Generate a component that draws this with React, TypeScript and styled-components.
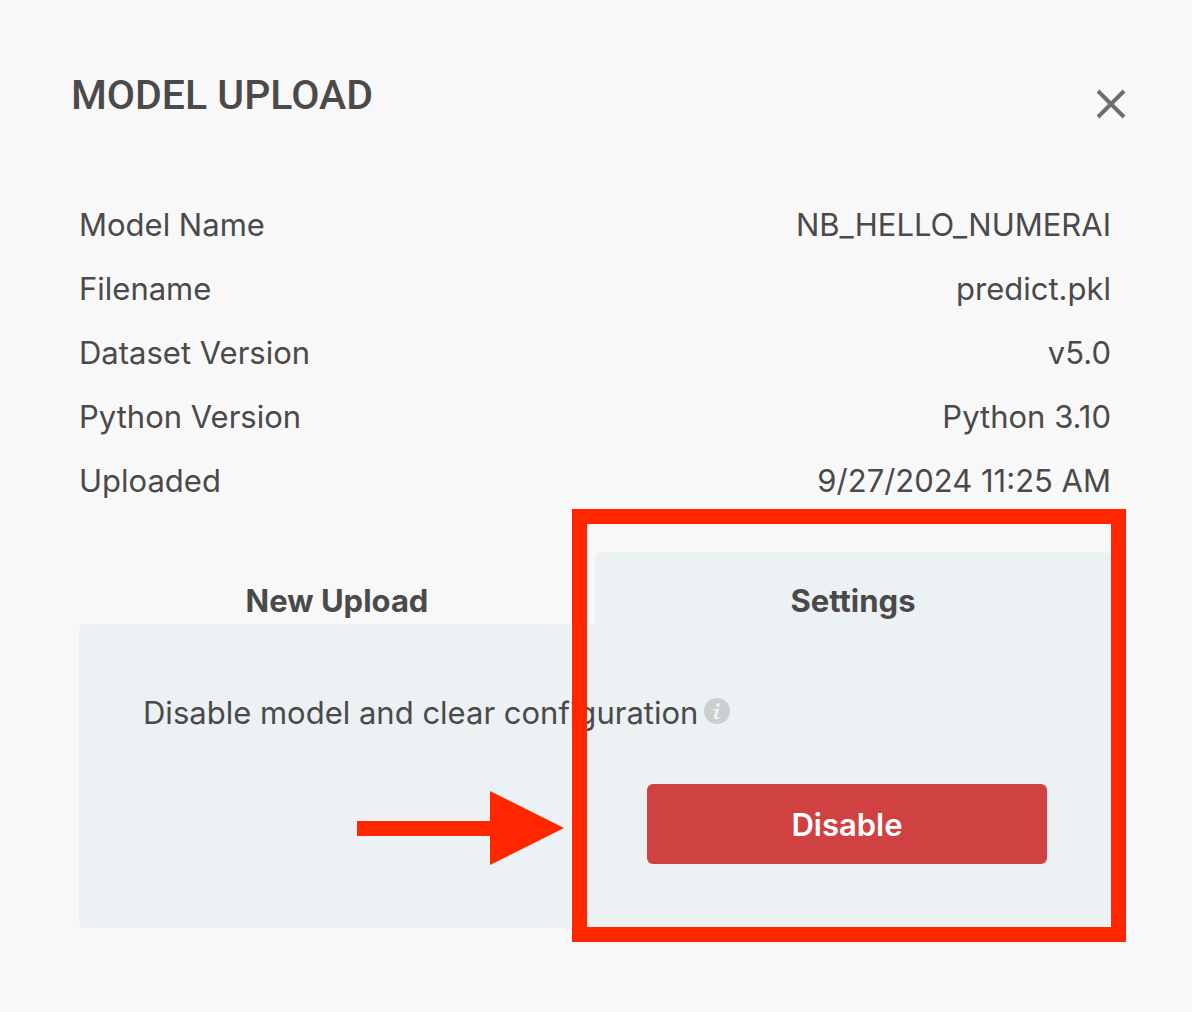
import React, { useState } from "react";
import styled, { createGlobalStyle } from "styled-components";

const GlobalStyle = createGlobalStyle`
  *, *::before, *::after { box-sizing: border-box; }
  body {
    margin: 0;
    background: #f8f8f8;
    color: #4a4a4a;
    font-family: Inter, "Liberation Sans", sans-serif;
    font-size: 31px;
    line-height: 50px;
  }
`;

const Dialog = styled.main`
  min-height: 100vh;
  padding: 72px 65px 84px 71px;
  background: #f8f8f8;
`;

const Header = styled.header`
  display: flex;
  justify-content: space-between;
  align-items: flex-start;
`;

const Title = styled.h1`
  margin: 0;
  font-family: Roboto, "Liberation Sans", sans-serif;
  font-size: 41px;
  font-weight: 500;
  line-height: 46px;
`;

const CloseButton = styled.button`
  display: flex;
  margin-top: 16px;
  padding: 0;
  border: 0;
  background: none;
  color: #6e6e6e;
  cursor: pointer;
`;

const Content = styled.div`
  padding: 80px 16px 0 8px;
`;

const Details = styled.dl`
  display: flex;
  flex-direction: column;
  gap: 14px;
  margin: 0 0 46px;
`;

const DetailRow = styled.div`
  display: flex;
  justify-content: space-between;
`;

const DetailLabel = styled.dt``;

const DetailValue = styled.dd`
  margin: 0;
  text-align: right;
`;

const TabSection = styled.section`
  position: relative;
`;

const TabList = styled.div`
  display: grid;
  grid-template-columns: 1fr 1fr;
`;

const Tab = styled.button<{ $active: boolean }>`
  padding: 26px 0 0;
  border: 0;
  border-radius: 6px 6px 0 0;
  background: ${(p) => (p.$active ? "#ecf1f4" : "transparent")};
  color: inherit;
  font: inherit;
  font-weight: 700;
  line-height: 46px;
  text-align: center;
  cursor: pointer;
`;

const Panel = styled.div`
  display: flex;
  flex-direction: column;
  gap: 46px;
  padding: 64px;
  border-radius: 6px 0 6px 6px;
  background: #ecf1f4;
`;

const Description = styled.p`
  display: flex;
  align-items: center;
  gap: 6px;
  margin: 0;
`;

const DangerButton = styled.button`
  align-self: flex-end;
  width: 400px;
  max-width: 100%;
  height: 80px;
  padding: 2px 0 0;
  border: 0;
  border-radius: 6px;
  background: #d04141;
  color: #fff;
  font: inherit;
  font-weight: 600;
  cursor: pointer;
`;

const Highlight = styled.div`
  position: absolute;
  top: -43px;
  right: -15px;
  bottom: -14px;
  left: calc(50% - 23px);
  border: 15px solid #ff2600;
  pointer-events: none;
`;

const Arrow = styled.svg`
  position: absolute;
  right: calc(50% + 31px);
  bottom: 63px;
  pointer-events: none;
`;

const details = [
  ["Model Name", "NB_HELLO_NUMERAI"],
  ["Filename", "predict.pkl"],
  ["Dataset Version", "v5.0"],
  ["Python Version", "Python 3.10"],
  ["Uploaded", "9/27/2024 11:25 AM"],
];

const tabs = ["New Upload", "Settings"];

function CloseIcon() {
  return (
    <svg width="32" height="32" viewBox="0 0 32 32" aria-hidden="true">
      <path d="M3 3 29 29M29 3 3 29" stroke="currentColor" strokeWidth="4" fill="none" />
    </svg>
  );
}

function InfoIcon() {
  return (
    <svg width="26" height="30" viewBox="0 0 26 30" aria-hidden="true">
      <circle cx="13" cy="13" r="13" fill="#cacfcf" />
      <circle cx="14" cy="7" r="2" fill="#ecf1f4" />
      <path
        d="M9 11H15L13 18.500Q13 19.500 15.500 19V20.500Q9.500 22.500 10 18.500L11.500 12.500L9 12.200Z"
        fill="#ecf1f4"
      />
    </svg>
  );
}

export default function App() {
  const [active, setActive] = useState("Settings");

  return (
    <>
      <GlobalStyle />
      <Dialog>
        <Header>
          <Title>MODEL UPLOAD</Title>
          <CloseButton type="button" aria-label="Close">
            <CloseIcon />
          </CloseButton>
        </Header>
        <Content>
          <Details>
            {details.map(([label, value]) => (
              <DetailRow key={label}>
                <DetailLabel>{label}</DetailLabel>
                <DetailValue>{value}</DetailValue>
              </DetailRow>
            ))}
          </Details>
          <TabSection>
            <TabList role="tablist">
              {tabs.map((name) => (
                <Tab
                  key={name}
                  type="button"
                  role="tab"
                  aria-selected={active === name}
                  $active={active === name}
                  onClick={() => setActive(name)}
                >
                  {name}
                </Tab>
              ))}
            </TabList>
            <Panel role="tabpanel" aria-label={active}>
              <Description>
                Disable model and clear configuration
                <InfoIcon />
              </Description>
              <DangerButton type="button">Disable</DangerButton>
            </Panel>
            <Highlight />
            <Arrow width="207" height="74" viewBox="0 0 207 74" aria-hidden="true">
              <path d="M0 30H133V0L207 37 133 74V45H0Z" fill="#ff2600" />
            </Arrow>
          </TabSection>
        </Content>
      </Dialog>
    </>
  );
}
